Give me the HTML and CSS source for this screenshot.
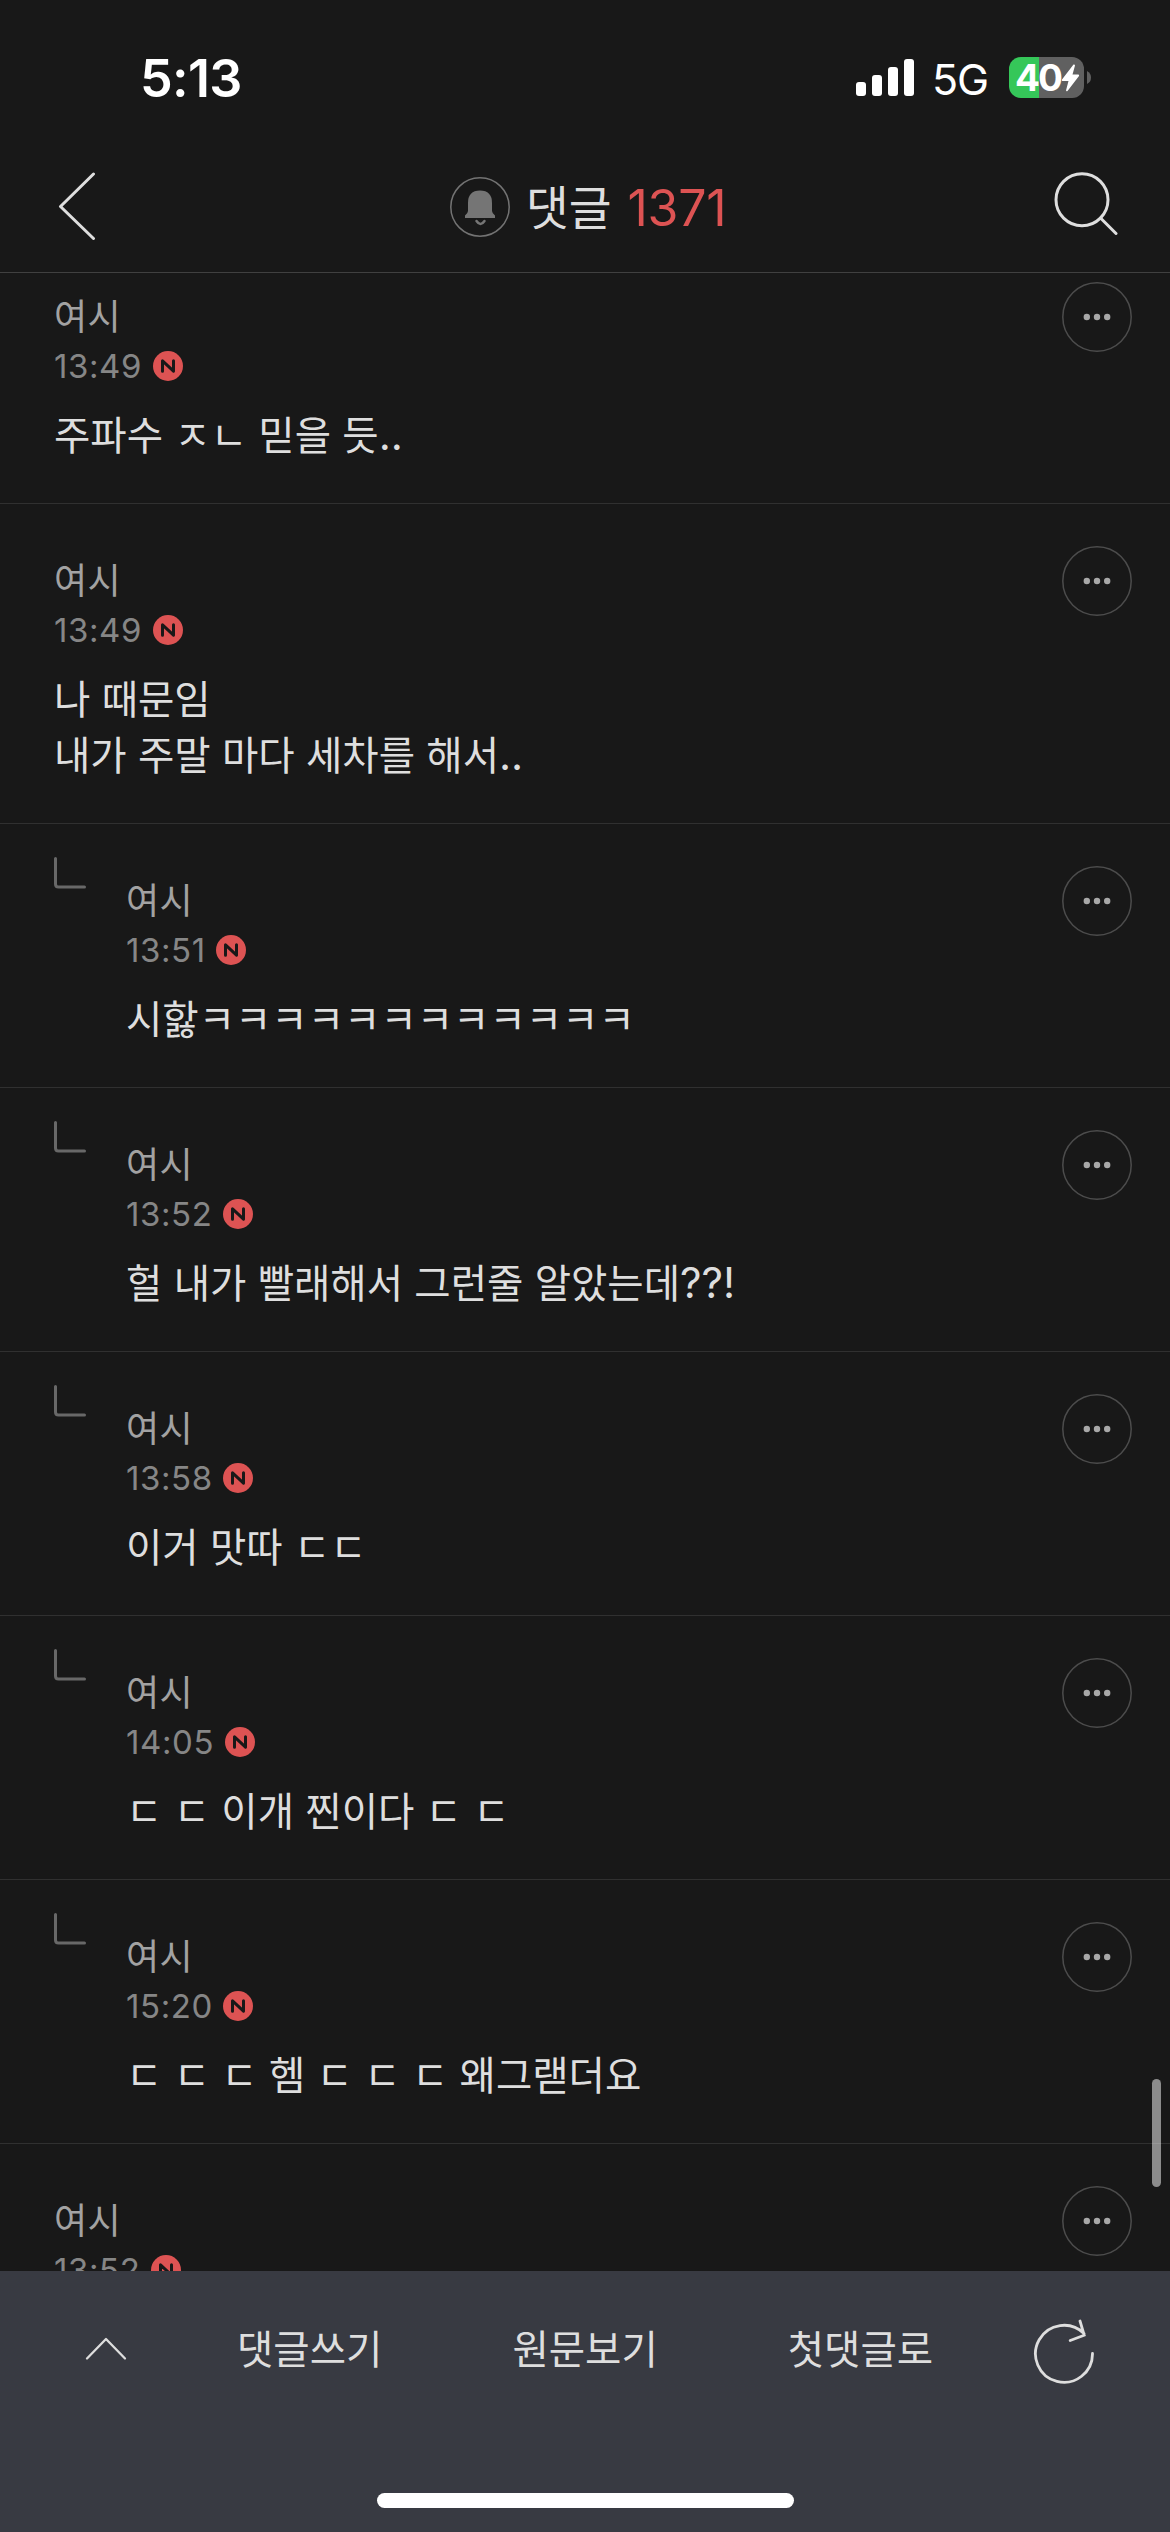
FILE: index.html
```
<!DOCTYPE html>
<html lang="ko">
<head>
<meta charset="utf-8">
<title>댓글</title>
<link rel="stylesheet" href="styles.css">
</head>
<body>
<svg class="defs" width="0" height="0">
  <symbol id="new" viewBox="0 0 30 30"><circle cx="15" cy="15" r="15" fill="#dd5353"/><path d="M9.500 20.200V9.800L20.500 20.200V9.800" fill="none" stroke="#181818" stroke-width="3" stroke-linecap="round" stroke-linejoin="round"/></symbol>
  <symbol id="more" viewBox="0 0 70 70"><circle cx="35" cy="35" r="34.2" fill="none" stroke="#4c4c4c" stroke-width="1.5"/><g fill="#a8a8a8"><circle cx="24.8" cy="35" r="3.2"/><circle cx="35" cy="35" r="3.2"/><circle cx="45.2" cy="35" r="3.2"/></g></symbol>
  <symbol id="reply" viewBox="0 0 32 33"><path d="M1.5 1.5V27Q1.5 30 4.500 30H30.500" fill="none" stroke="#686868" stroke-width="3" stroke-linecap="round"/></symbol>
</svg>
<div class="screen">
  <div class="status">
    <div class="clock">5:13</div>
    <div class="indicators">
      <svg class="signal" width="58" height="38" viewBox="0 0 58 38" fill="#fff"><rect x="0" y="23" width="10" height="14" rx="3"/><rect x="16" y="16" width="10" height="21" rx="3"/><rect x="32" y="8" width="10" height="29" rx="3"/><rect x="48" y="0" width="10" height="37" rx="3"/></svg>
      <span class="network">5G</span>
      <div class="battery"><span class="level">40</span><svg width="19" height="28" viewBox="0 0 19 28"><path d="M12.500 .5L1 15.500Q.3 17 1.600 17H7.500L5 26.500Q5.300 27.700 6.500 27L18 12Q18.500 10.700 17.300 10.500H11.500L14 1.500Q13.800 0 12.500 .5Z" fill="#fff"/></svg></div>
      <svg class="nub" width="4" height="13" viewBox="0 0 4 13"><path d="M0 0Q4 2 4 6.500T0 13Z" fill="#606060"/></svg>
    </div>
  </div>
  <header class="header">
    <svg class="back" width="38" height="68" viewBox="0 0 38 68"><path d="M35.500 2L2.500 34.500L35.500 66.500" fill="none" stroke="#dedede" stroke-width="3" stroke-linecap="round" stroke-linejoin="round"/></svg>
    <div class="title">
      <svg width="60" height="60" viewBox="0 0 60 60"><circle cx="30" cy="30" r="29.200" fill="none" stroke="#737373" stroke-width="1.500"/><path d="M18 26Q18 13.500 30 13.500T42 26V34Q42 36 45 38.500V41H15V38.500Q18 36 18 34Z" fill="#757575"/><path d="M26.500 44Q30.500 50 34.500 44" fill="none" stroke="#757575" stroke-width="2.500" stroke-linecap="round"/></svg>
      <h1>댓글</h1><span class="count">1371</span>
    </div>
    <svg class="search" width="64" height="64" viewBox="0 0 64 64"><g fill="none" stroke="#dedede" stroke-width="3" stroke-linecap="round"><circle cx="28" cy="27.800" r="26"/><path d="M46.500 46L62 61.500"/></g></svg>
  </header>
  <main class="list">
    <article class="comment"><div class="content"><div class="name">여시</div><div class="meta"><time>13:49</time><svg><use href="#new"/></svg></div><p>주파수 ㅈㄴ 믿을 듯<span class="mark">..</span></p></div><svg class="more"><use href="#more"/></svg></article>
    <article class="comment"><div class="content"><div class="name">여시</div><div class="meta"><time>13:49</time><svg><use href="#new"/></svg></div><p>나 때문임<br>내가 주말 마다 세차를 해서<span class="mark">..</span></p></div><svg class="more"><use href="#more"/></svg></article>
    <article class="comment"><svg class="branch"><use href="#reply"/></svg><div class="content"><div class="name">여시</div><div class="meta"><time>13:51</time><svg><use href="#new"/></svg></div><p>시핧ㅋㅋㅋㅋㅋㅋㅋㅋㅋㅋㅋㅋ</p></div><svg class="more"><use href="#more"/></svg></article>
    <article class="comment"><svg class="branch"><use href="#reply"/></svg><div class="content"><div class="name">여시</div><div class="meta"><time>13:52</time><svg><use href="#new"/></svg></div><p>헐 내가 빨래해서 그런줄 알았는데<span class="mark">??!</span></p></div><svg class="more"><use href="#more"/></svg></article>
    <article class="comment"><svg class="branch"><use href="#reply"/></svg><div class="content"><div class="name">여시</div><div class="meta"><time>13:58</time><svg><use href="#new"/></svg></div><p>이거 맛따 ㄷㄷ</p></div><svg class="more"><use href="#more"/></svg></article>
    <article class="comment"><svg class="branch"><use href="#reply"/></svg><div class="content"><div class="name">여시</div><div class="meta"><time>14:05</time><svg><use href="#new"/></svg></div><p>ㄷ ㄷ 이개 찐이다 ㄷ ㄷ</p></div><svg class="more"><use href="#more"/></svg></article>
    <article class="comment"><svg class="branch"><use href="#reply"/></svg><div class="content"><div class="name">여시</div><div class="meta"><time>15:20</time><svg><use href="#new"/></svg></div><p>ㄷ ㄷ ㄷ 헴 ㄷ ㄷ ㄷ 왜그랟더요</p></div><svg class="more"><use href="#more"/></svg></article>
    <article class="comment"><div class="content"><div class="name">여시</div><div class="meta"><time>13:52</time><svg><use href="#new"/></svg></div></div><svg class="more"><use href="#more"/></svg></article>
    <div class="scrollbar"></div>
  </main>
  <footer class="footer">
    <nav class="toolbar">
      <svg class="up" width="42" height="24" viewBox="0 0 42 24"><path d="M2 21.500L21 2L40 21.500" fill="none" stroke="#dedede" stroke-width="2.300" stroke-linecap="round" stroke-linejoin="round"/></svg>
      <div class="actions"><span>댓글쓰기</span><span>원문보기</span><span>첫댓글로</span></div>
      <svg class="refresh" width="62" height="66" viewBox="0 0 62 66"><path d="M59.500 34.500A28.500 28.500 0 1 1 51 14.500M47 2L51.200 16.200L37.200 21.500" fill="none" stroke="#dedede" stroke-width="2.800" stroke-linecap="round"/></svg>
    </nav>
    <div class="home"></div>
  </footer>
</div>
</body>
</html>
```
FILE: styles.css
```
* { box-sizing: border-box; }
body { margin: 0; background: #181818; }
.defs { display: block; height: 0; }
svg { display: block; flex: none; }
.screen {
  width: 1170px;
  height: 2532px;
  display: flex;
  flex-direction: column;
  overflow: hidden;
  background: #181818;
  color: #dedede;
  font-family: Inter, "Noto Sans CJK KR", sans-serif;
}
.status {
  height: 141px;
  flex: none;
  display: flex;
  justify-content: space-between;
  padding: 57px 79px 0 140px;
  color: #fff;
}
.clock { font-size: 52px; font-weight: 600; line-height: 43px; letter-spacing: -.7px; }
.indicators { display: flex; align-items: flex-start; height: 41px; }
.signal { margin-top: 2px; }
.network { width: 95px; padding-left: 18px; font-size: 43px; line-height: 44px; letter-spacing: -1.2px; }
.battery {
  display: flex;
  align-items: center;
  gap: 1px;
  width: 75px;
  height: 41px;
  padding-left: 6px;
  border-radius: 12px;
  background: linear-gradient(90deg, #35c759 30px, #606060 30px);
}
.level { width: 45px; font-size: 37px; font-weight: 700; line-height: 41px; letter-spacing: -2px; }
.nub { margin: 14px 0 0 3px; }
.header {
  height: 132px;
  flex: none;
  display: flex;
  align-items: center;
  padding: 0 52px 0 58px;
  border-bottom: 1px solid #404040;
}
.back { margin-top: -1px; }
.title { display: flex; align-items: center; margin-left: 354px; }
.title h1 { margin: 2px 16px 0 16px; font-size: 46.5px; font-weight: 400; line-height: 60px; }
.count { margin-top: 2px; color: #dd5353; font-size: 50px; line-height: 60px; letter-spacing: -.3px; }
.search { margin: -6px 0 0 auto; }
.list { position: relative; height: 1998px; flex: none; overflow: hidden; }
.comment {
  display: flex;
  align-items: flex-start;
  padding: 55px 38px 39px 54px;
  border-bottom: 1px solid #303030;
}
.comment:first-child { margin-top: -33px; }
.branch { width: 32px; height: 33px; margin: -22px 40px 0 0; }
.content { flex: 1; }
.name { height: 44px; font-size: 36px; line-height: 44px; letter-spacing: .5px; color: #a2a2a2; }
.meta { display: flex; align-items: center; gap: 10.5px; height: 30px; margin-top: 12px; }
.meta time { font-size: 33px; line-height: 30px; letter-spacing: .6px; color: #868686; }
.meta svg { width: 30px; height: 30px; }
.comment p { margin: 27px 0 0; font-size: 39.5px; line-height: 56px; word-spacing: .2px; }
.mark { font-size: 42px; line-height: 0; }
.more { width: 70px; height: 70px; margin-top: -13px; }
.scrollbar {
  position: absolute;
  top: 1806px;
  right: 9px;
  width: 9px;
  height: 108px;
  border-radius: 5px;
  background: rgba(255, 255, 255, .5);
}
.footer {
  height: 261px;
  flex: none;
  display: flex;
  flex-direction: column;
  align-items: center;
  background: #383a42;
}
.toolbar {
  width: 100%;
  height: 222px;
  display: flex;
  align-items: flex-start;
  padding: 49px 75px 0 85px;
}
.actions { display: flex; gap: 130px; margin-left: 110px; font-size: 39.5px; line-height: 60px; }
.up { margin-top: 17px; }
.refresh { margin: -1px 0 0 auto; }
.home { width: 417px; height: 15px; border-radius: 8px; background: #fff; }
```
